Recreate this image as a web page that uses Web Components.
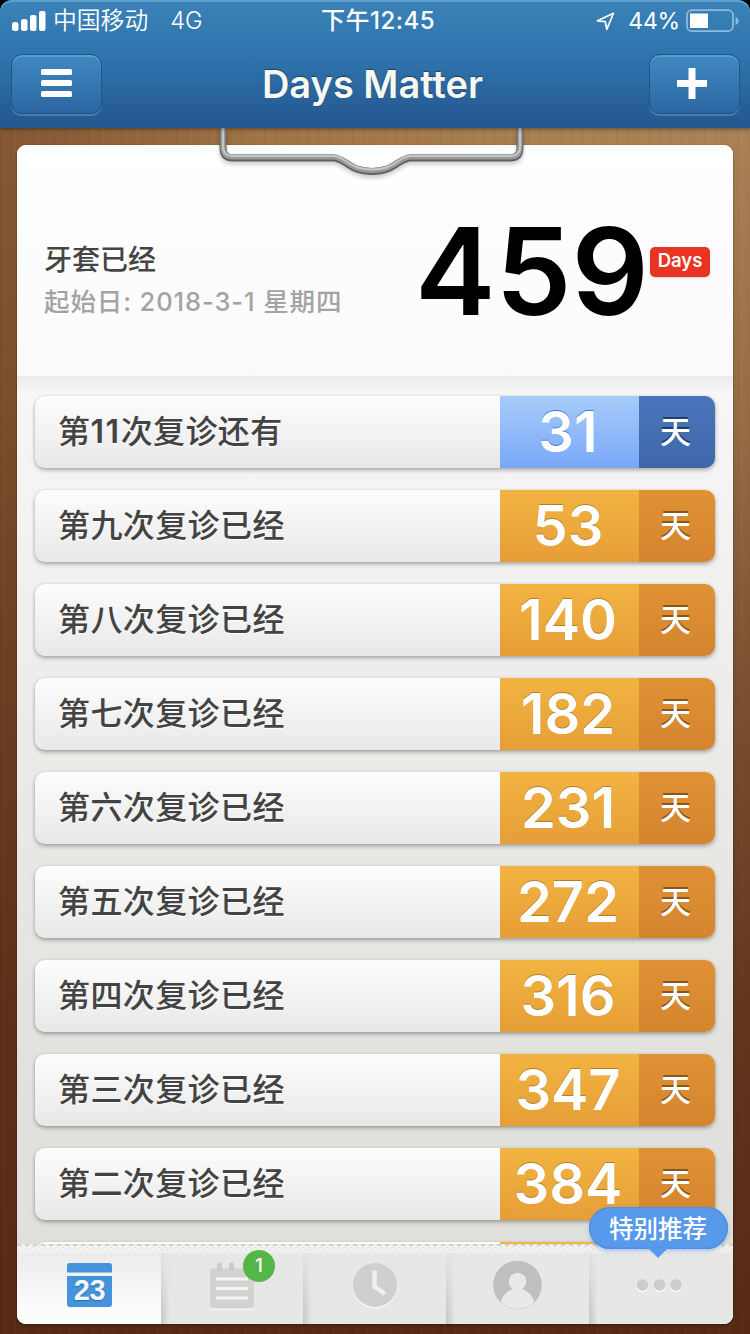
<!DOCTYPE html>
<html lang="zh-CN">
<head>
<meta charset="UTF-8">
<title>Days Matter</title>
<style>
    html, body {
        margin: 0;
        padding: 0;
    }

    body {
        width: 750px;
        height: 1334px;
        overflow: hidden;
        background: #000;
        font-family: Inter, "Noto Sans CJK SC", sans-serif;
    }
</style>
</head>
<body>
<days-app></days-app>

<script>
class StatusBar extends HTMLElement {
    constructor() {
        super();
        this.attachShadow({ mode: 'open' });
        this.shadowRoot.innerHTML = `
            <style>
                :host {
                    display: grid;
                    grid-template-columns: 1fr auto 1fr;
                    align-items: center;
                    height: 40px;
                    padding: 0 10px 0 12px;
                    color: #fff;
                    font-size: 23px;
                    line-height: 42px;
                    white-space: nowrap;
                }

                .left, .right {
                    display: flex;
                    align-items: center;
                }

                .left svg {
                    margin-right: 7px;
                }

                .carrier {
                    font-size: 23.8px;
                    font-weight: 350;
                    margin-right: 22px;
                }

                .network {
                    font-weight: 300;
                    font-size: 23.5px;
                }

                .time {
                    font-weight: 500;
                    font-size: 24px;
                    letter-spacing: 0.5px;
                    margin-left: 4px;
                }

                .right {
                    justify-content: flex-end;
                }

                .percent {
                    font-weight: 400;
                    letter-spacing: -0.2px;
                    margin: 0 6px 0 13px;
                }
            </style>
            <div class="left">
                <svg width="34" height="21" viewBox="0 0 34 21" fill="#fff">
                    <rect x="0" y="11" width="6.5" height="9" rx="2.5"/>
                    <rect x="9" y="8" width="6.5" height="12" rx="2.5"/>
                    <rect x="18" y="4" width="6.5" height="16" rx="2"/>
                    <rect x="27" y="0" width="6.5" height="20" rx="2"/>
                </svg>
                <span class="carrier">中国移动</span>
                <span class="network">4G</span>
            </div>
            <div class="time">下午12:45</div>
            <div class="right">
                <svg width="19" height="19" viewBox="0 0 19 19" fill="none" stroke="#fff" stroke-width="1.7" stroke-linejoin="round">
                    <path d="M17.5 1.2 L1.5 8.8 L9.3 9.6 L10.8 17.4 Z"/>
                </svg>
                <span class="percent">44%</span>
                <svg width="54" height="24" viewBox="0 0 54 24">
                    <rect x="1" y="1.2" width="46" height="21" rx="5" fill="none" stroke="#8ebadb" stroke-width="1.8"/>
                    <rect x="4" y="4.5" width="18" height="14.5" fill="#fff"/>
                    <path d="M49.5 8 q3.2 1.2 3.2 4 q0 2.8 -3.2 4 z" fill="#8ebadb"/>
                </svg>
            </div>
        `;
    }
}

class NavButton extends HTMLElement {
    constructor() {
        super();
        this.attachShadow({ mode: 'open' });
        this.shadowRoot.innerHTML = `
            <style>
                :host {
                    display: flex;
                    align-items: center;
                    justify-content: center;
                    box-sizing: border-box;
                    width: 91px;
                    height: 60px;
                    border: 1.5px solid #1f5688;
                    border-radius: 11px;
                    background: linear-gradient(#3f89c1, #2c66a2);
                    box-shadow: inset 0 2px 0 #5a9ccb, 0 2px 0 rgba(110, 165, 210, 0.45);
                }
            </style>
            <slot></slot>
        `;
    }
}

class NavBar extends HTMLElement {
    constructor() {
        super();
        this.attachShadow({ mode: 'open' });
        this.shadowRoot.innerHTML = `
            <style>
                :host {
                    display: flex;
                    align-items: center;
                    justify-content: space-between;
                    box-sizing: border-box;
                    height: 88px;
                    padding: 0 10px 0 11px;
                }

                h1 {
                    margin: 0 6px 0 0;
                    color: #f8f8f3;
                    font-size: 38px;
                    font-weight: 600;
                    letter-spacing: 0;
                    line-height: 88px;
                    text-shadow: 0 -1px 1px rgba(0, 0, 0, 0.4);
                }

                nav-button svg {
                    display: block;
                    margin: 0 1px 1px 0;
                }

                nav-button:last-child svg {
                    margin-right: 5px;
                }
            </style>
            <nav-button>
                <svg width="31" height="29" viewBox="0 0 31 29" fill="#fff">
                    <rect width="31" height="6" rx="1.5"/>
                    <rect y="11" width="31" height="6" rx="1.5"/>
                    <rect y="22" width="31" height="6" rx="1.5"/>
                </svg>
            </nav-button>
            <h1><slot></slot></h1>
            <nav-button>
                <svg width="30" height="31" viewBox="0 0 30 31" fill="#fff">
                    <path d="M11.5 0h7v12H30v7H18.5v12h-7V19H0v-7h11.5z"/>
                </svg>
            </nav-button>
        `;
    }
}

class PaperClip extends HTMLElement {
    constructor() {
        super();
        this.attachShadow({ mode: 'open' });
        this.shadowRoot.innerHTML = `
            <style>
                :host {
                    display: block;
                    width: 320px;
                    height: 56px;
                }

                svg {
                    display: block;
                    filter: drop-shadow(0 3px 2px rgba(0, 0, 0, 0.2));
                }
            </style>
            <svg width="320" height="56" viewBox="0 0 320 56" fill="none" stroke-linejoin="round">
                <path d="M11 -2 V20 Q11 30 21 30 H121 C134 30 136 43.5 160 43.5 C184 43.5 186 30 199 30 H298 Q308 30 308 20 V-2" stroke="#626262" stroke-width="7"/>
                <path d="M11 -2 V19 Q11 29 21 29 H121 C134 29 136 42.5 160 42.5 C184 42.5 186 29 199 29 H298 Q308 29 308 19 V-2" stroke="#9a9a9a" stroke-width="5"/>
                <path d="M11 -2 V18 Q11 28 21 28 H121 C134 28 136 41.5 160 41.5 C184 41.5 186 28 199 28 H298 Q308 28 308 18 V-2" stroke="#c6c6c6" stroke-width="2"/>
            </svg>
        `;
    }
}

class HeroCount extends HTMLElement {
    constructor() {
        super();
        this.attachShadow({ mode: 'open' });
        this.shadowRoot.innerHTML = `
            <style>
                :host {
                    display: flex;
                    align-items: flex-start;
                    justify-content: space-between;
                    box-sizing: border-box;
                    height: 231px;
                    padding: 0 23px 0 27px;
                    background: linear-gradient(#fff, #fafafa);
                }

                .info {
                    padding-top: 95px;
                }

                .title {
                    color: #454545;
                    font-size: 28px;
                    font-weight: 500;
                    line-height: 40px;
                }

                .date {
                    color: #a3a3a3;
                    font-size: 25.5px;
                    font-weight: 500;
                    letter-spacing: 0.9px;
                    line-height: 43px;
                    white-space: nowrap;
                }

                .count {
                    display: flex;
                }

                .number {
                    color: #000;
                    font-size: 121px;
                    font-weight: 600;
                    line-height: 140px;
                    padding-top: 56px;
                }

                .unit {
                    height: 30px;
                    width: 60px;
                    margin: 102px 0 0 1px;
                    border-radius: 5px;
                    background: #e93323;
                    color: #fff;
                    font-size: 18.5px;
                    font-weight: 600;
                    line-height: 27px;
                    text-align: center;
                    box-shadow: 0 1px 2px rgba(0, 0, 0, 0.15);
                }
            </style>
            <div class="info">
                <div class="title"><slot name="title"></slot></div>
                <div class="date"><slot name="date"></slot></div>
            </div>
            <div class="count">
                <div class="number"><slot name="number"></slot></div>
                <div class="unit">Days</div>
            </div>
        `;
    }
}

class EventRow extends HTMLElement {
    constructor() {
        super();
        this.attachShadow({ mode: 'open' });
    }

    connectedCallback() {
        const days = this.getAttribute('days') || '';

        this.shadowRoot.innerHTML = `
            <style>
                :host {
                    --count: linear-gradient(#f2b442, #e69e37);
                    --unit: linear-gradient(#e09133, #d5852f);
                    --carve: #b37f2a;
                    --carve-unit: #8a571b;
                    display: flex;
                    flex: none;
                    height: 72px;
                    border-radius: 10px;
                    overflow: hidden;
                    background: linear-gradient(#fdfdfd, #e8e8e8);
                    box-shadow: 0 2px 4px rgba(0, 0, 0, 0.32), 0 0 1px rgba(0, 0, 0, 0.2);
                }

                :host([future]) {
                    --count: linear-gradient(#a7ccfa, #79a8f8);
                    --unit: linear-gradient(#4a76bb, #4066aa);
                    --carve: #3f7ddb;
                    --carve-unit: #1f3e70;
                }

                .label {
                    flex: 1;
                    padding-left: 23px;
                    color: #434343;
                    font-size: 32px;
                    font-weight: 500;
                    letter-spacing: 0.4px;
                    line-height: 72px;
                    text-shadow: 0 1px 0 #fff;
                }

                .days {
                    width: 139px;
                    background: var(--count);
                    color: #fff;
                    font-size: 56px;
                    font-weight: 600;
                    line-height: 72px;
                    text-align: center;
                    text-indent: -3px;
                    text-shadow: 0 -1.5px 0 var(--carve);
                }

                .unit {
                    width: 76px;
                    background: var(--unit);
                    color: #fff;
                    font-size: 31px;
                    font-weight: 500;
                    line-height: 71px;
                    text-align: center;
                    text-indent: -3px;
                    text-shadow: 0 -2px 0 var(--carve-unit);
                }
            </style>
            <div class="label"><slot></slot></div>
            <div class="days">${days}</div>
            <div class="unit">${days ? '天' : ''}</div>
        `;
    }
}

class EventList extends HTMLElement {
    constructor() {
        super();
        this.attachShadow({ mode: 'open' });
        this.shadowRoot.innerHTML = `
            <style>
                :host {
                    display: flex;
                    flex: 1;
                    flex-direction: column;
                    gap: 22px;
                    min-height: 0;
                    box-sizing: border-box;
                    padding: 20px 18px 0;
                    overflow: hidden;
                    background:
                        linear-gradient(#ece9ea, rgba(246, 246, 246, 0)) 0 0 / 100% 16px no-repeat,
                        linear-gradient(#f7f7f8, #eeeeec 32%, #e2e3de 75%, #dfe0db);
                }
            </style>
            <slot></slot>
        `;
    }
}

class TabItem extends HTMLElement {
    constructor() {
        super();
        this.attachShadow({ mode: 'open' });
        this.shadowRoot.innerHTML = `
            <style>
                :host {
                    display: flex;
                    position: relative;
                    align-items: center;
                    justify-content: center;
                    background:
                        linear-gradient(#e7e7e6, rgba(231, 231, 230, 0) 90%) 0 0 / 12px 100% no-repeat,
                        linear-gradient(90deg, rgba(0, 0, 0, 0.14), transparent 9px),
                        #e7e7e6;
                }

                :host([active]) {
                    background: linear-gradient(#e9e9e9, #fcfcfc 85%);
                }

                ::slotted(svg) {
                    display: block;
                    overflow: visible;
                }
            </style>
            <slot></slot>
            <slot name="badge"></slot>
        `;
    }
}

class TabBar extends HTMLElement {
    constructor() {
        super();
        this.attachShadow({ mode: 'open' });
        this.shadowRoot.innerHTML = `
            <style>
                :host {
                    display: grid;
                    position: relative;
                    grid-template-columns: 144px 142px 143px 143px 144px;
                    height: 79px;
                    background: #f6f6f6;
                }

                /* stitched edge along the top of the bar */
                .stitch {
                    position: absolute;
                    z-index: 1;
                    inset: -1px 0 auto;
                    height: 9px;
                    background:
                        repeating-linear-gradient(90deg, #d0d0cd 0 4px, #ededeb 4px 8px) 0 0 / 100% 2px no-repeat,
                        repeating-linear-gradient(45deg, rgba(255, 255, 255, 0.35) 0 2px, transparent 2px 4.24px),
                        repeating-linear-gradient(-45deg, rgba(255, 255, 255, 0.35) 0 2px, transparent 2px 4.24px);
                }

                .badge {
                    position: absolute;
                    z-index: 2;
                    left: 82px;
                    top: 5px;
                    width: 32px;
                    height: 32px;
                    border-radius: 50%;
                    background: #53b646;
                    color: #fff;
                    font-size: 19px;
                    font-weight: 500;
                    line-height: 32px;
                    text-align: center;
                }

                .tip {
                    position: absolute;
                    z-index: 3;
                    left: 572px;
                    top: -38px;
                    width: 139px;
                    height: 42px;
                    border-radius: 21px;
                    background: #5799ea;
                    box-shadow: inset 0 0 0 1.5px #4e90e2, 0 2px 4px rgba(60, 120, 200, 0.4);
                    color: #fff;
                    font-size: 24.5px;
                    font-weight: 500;
                    line-height: 45px;
                    text-align: center;
                    text-indent: -1px;
                }

                .tip svg {
                    position: absolute;
                    left: 59px;
                    top: 41px;
                }

                .more {
                    margin-right: 3px;
                }
            </style>
            <div class="stitch"></div>
            <tab-item active>
                <svg width="45" height="43" viewBox="0 0 45 43">
                    <path d="M0 9.5 V3 Q0 0 3 0 H42 Q45 0 45 3 V9.5Z" fill="#4493dc"/>
                    <path d="M0 13 H45 V41 Q45 44 42 44 H3 Q0 44 0 41Z" fill="#4493dc"/>
                    <text x="22.5" y="37" font-family="Liberation Sans, sans-serif" font-size="29" font-weight="700" letter-spacing="-0.5" text-anchor="middle" fill="#f4f8fc" style="text-shadow: 0 1px 1px #2c69a8">23</text>
                </svg>
            </tab-item>
            <tab-item>
                <svg width="44" height="46" viewBox="0 0 44 46">
                    <rect y="8" width="44" height="40" rx="3" fill="#f6f6f5"/>
                    <rect y="6.5" width="44" height="40" rx="3" fill="#d2d2d0"/>
                    <rect x="7" y="0.5" width="5" height="8" rx="2.5" fill="#cbcbc9"/>
                    <rect x="19" y="0.5" width="5" height="8" rx="2.5" fill="#cbcbc9"/>
                    <path d="M6 17H38M6 26.5H38M6 36H38" stroke="#f3f3f2" stroke-width="3.2"/>
                </svg>
                <div class="badge" slot="badge">1</div>
            </tab-item>
            <tab-item>
                <svg width="44" height="43" viewBox="0 0 44 43">
                    <circle cx="22" cy="23.5" r="22" fill="#f7f7f6"/>
                    <circle cx="22" cy="22" r="22" fill="#cfcfcd"/>
                    <path d="M21.5 7.5V23.5L32 31" fill="none" stroke="#efefee" stroke-width="4.5"/>
                </svg>
            </tab-item>
            <tab-item>
                <svg width="49" height="49" viewBox="0 0 49 49">
                    <circle cx="24.5" cy="25" r="24.3" fill="#bfbfbf"/>
                    <circle cx="24.5" cy="21.5" r="8.8" fill="#e9e9e9"/>
                    <path d="M20 26H29V29C36 31 40 37 41.2 42A23.5 23.5 0 0 1 7.800 42C9 37 13 31 20 29Z" fill="#e9e9e9"/>
                </svg>
            </tab-item>
            <tab-item>
                <svg class="more" width="45" height="12" viewBox="0 0 45 12">
                    <g fill="#f8f8f8">
                        <circle cx="5.5" cy="7.5" r="6"/>
                        <circle cx="22.5" cy="7.5" r="6"/>
                        <circle cx="39" cy="7.5" r="6"/>
                    </g>
                    <g fill="#cccccb">
                        <circle cx="5.5" cy="6" r="5.8"/>
                        <circle cx="22.5" cy="6" r="5.8"/>
                        <circle cx="39" cy="6" r="5.8"/>
                    </g>
                </svg>
            </tab-item>
            <div class="tip">
                特别推荐
                <svg width="20" height="11" viewBox="0 0 20 11"><path d="M0 0H20L10 10Z" fill="#5799ea"/></svg>
            </div>
        `;
    }
}

class DaysApp extends HTMLElement {
    constructor() {
        super();
        this.attachShadow({ mode: 'open' });
        this.shadowRoot.innerHTML = `
            <style>
                :host {
                    display: grid;
                    grid-template-rows: 128px 1206px;
                    width: 750px;
                    height: 1334px;
                }

                header {
                    position: relative;
                    z-index: 1;
                    border-radius: 12px 12px 0 0;
                    background: linear-gradient(#3a82b8, #2f74ad 45%, #24568f);
                    box-shadow: inset 0 2px 0 #5aa2cc, 0 1px 4px rgba(0, 0, 0, 0.45);
                }

                main {
                    display: flex;
                    position: relative;
                    box-sizing: border-box;
                    padding: 17px 17px 10px;
                    background:
                        repeating-linear-gradient(90deg, rgba(50, 20, 0, 0.05) 0 1px, transparent 1px 4px, rgba(255, 220, 160, 0.03) 4px 5px, transparent 5px 11px),
                        linear-gradient(rgba(86, 42, 20, 0) 0, rgba(86, 42, 20, 0.25) 25%, rgba(86, 42, 20, 0.55) 45%, rgba(86, 42, 20, 0.85) 72%, #562a14),
                        linear-gradient(90deg, #835833, #a07446 35%, #a98253 75%, #aa8256);
                }

                .sheet {
                    display: flex;
                    flex: 1;
                    flex-direction: column;
                    border-radius: 9px;
                    background: #fff;
                    box-shadow: 0 1px 3px rgba(0, 0, 0, 0.4);
                }

                hero-count {
                    border-radius: 9px 9px 0 0;
                }

                .num {
                    font-weight: 600;
                    letter-spacing: 1.6px;
                }

                tab-bar {
                    clip-path: inset(-60px 0 0 0 round 0 0 9px 9px);
                }

                paper-clip {
                    position: absolute;
                    left: 212px;
                    top: 0;
                }
            </style>
            <header>
                <status-bar></status-bar>
                <nav-bar>Days Matter</nav-bar>
            </header>
            <main>
                <div class="sheet">
                    <hero-count>
                        <span slot="title">牙套已经</span>
                        <span slot="date">起始日: 2018-3-1 星期四</span>
                        <span slot="number">459</span>
                    </hero-count>
                    <event-list>
                        <event-row days="31" future>第<span class="num">11</span>次复诊还有</event-row>
                        <event-row days="53">第九次复诊已经</event-row>
                        <event-row days="140">第八次复诊已经</event-row>
                        <event-row days="182">第七次复诊已经</event-row>
                        <event-row days="231">第六次复诊已经</event-row>
                        <event-row days="272">第五次复诊已经</event-row>
                        <event-row days="316">第四次复诊已经</event-row>
                        <event-row days="347">第三次复诊已经</event-row>
                        <event-row days="384">第二次复诊已经</event-row>
                        <event-row></event-row>
                    </event-list>
                    <tab-bar></tab-bar>
                </div>
                <paper-clip></paper-clip>
            </main>
        `;
    }
}

customElements.define('status-bar', StatusBar);
customElements.define('nav-button', NavButton);
customElements.define('nav-bar', NavBar);
customElements.define('paper-clip', PaperClip);
customElements.define('hero-count', HeroCount);
customElements.define('event-row', EventRow);
customElements.define('event-list', EventList);
customElements.define('tab-item', TabItem);
customElements.define('tab-bar', TabBar);
customElements.define('days-app', DaysApp);
</script>
</body>
</html>
